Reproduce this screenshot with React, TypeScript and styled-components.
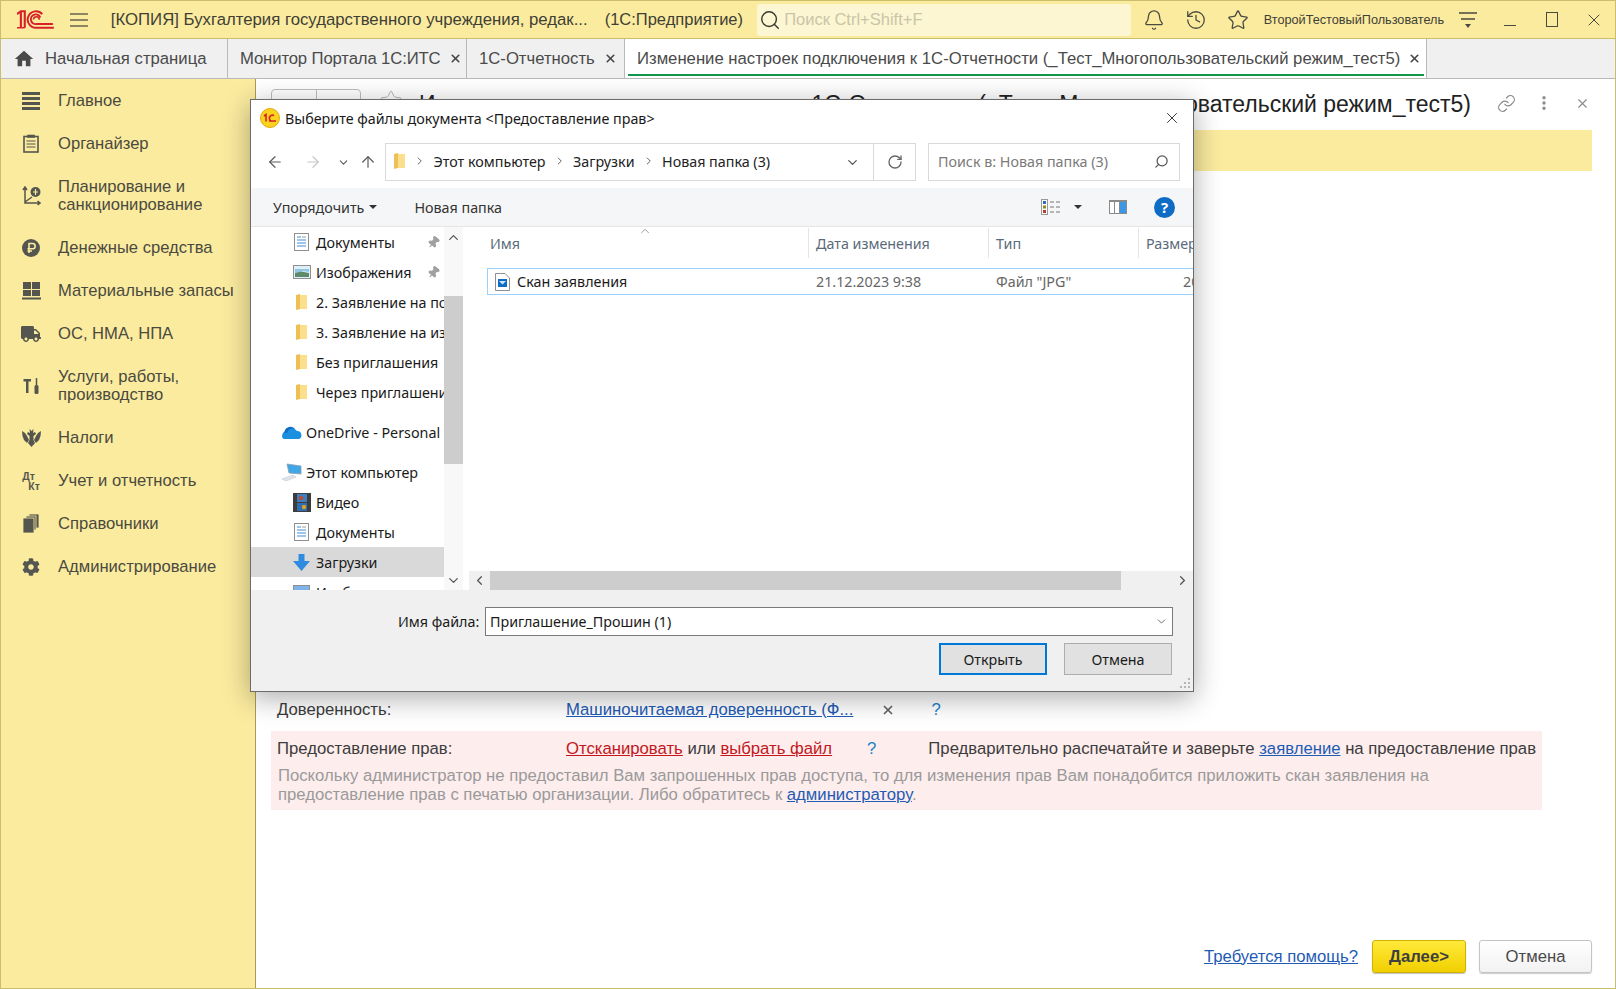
import React from "react";
import styled, { createGlobalStyle } from "styled-components";
import {
  ArrowLeft,
  ArrowRight,
  ArrowUp,
  Bell,
  ChevronDown,
  ChevronLeft,
  ChevronRight,
  ChevronUp,
  EllipsisVertical,
  History,
  Link,
  Pin,
  RotateCw,
  Search,
  Star,
  X,
} from "lucide-react";
import { FaCog, FaTruck } from "react-icons/fa";
import { MdHome } from "react-icons/md";

const Global = createGlobalStyle`
  html, body { margin: 0; padding: 0; background: #fff; }
  * { box-sizing: border-box; }
`;

const ONEC = `"Liberation Sans", Arial, sans-serif`;
const WIN = `"Noto Sans", "Open Sans", sans-serif`;

const Root = styled.div`
  position: relative;
  width: 1616px;
  height: 989px;
  display: flex;
  flex-direction: column;
  overflow: hidden;
  border: 1px solid #c9be6c;
  font-family: ${ONEC};
  background: #fff;
`;

const Header = styled.header`
  flex: 0 0 38px;
  display: flex;
  align-items: center;
  background: #fbeb9f;
  border-bottom: 1px solid #c9be6c;
  color: #3f3f36;
`;

const Logo = styled.svg`
  margin-left: 16px;
  width: 37px;
  height: 19px;
`;

const Burger = styled.svg`
  margin-left: 16px;
  width: 18px;
  height: 14px;
`;

const AppTitle = styled.div`
  margin-left: 23px;
  width: 478px;
  font-size: 16.75px;
  white-space: nowrap;
`;

const AppKind = styled.div`
  margin-left: 17px;
  width: 142px;
  font-size: 16.5px;
  white-space: nowrap;
`;

const GlobalSearch = styled.div`
  margin: 0 2px 0 11px;
  width: 375px;
  height: 32px;
  border-radius: 3px;
  background: #fdf6d2;
  display: flex;
  align-items: center;
  padding-left: 2px;
  gap: 3px;
  color: #c9c5a8;
  font-size: 16.5px;

  svg {
    color: #3b3b33;
  }
`;

const HeadBtn = styled.div`
  flex: 0 0 42px;
  display: flex;
  align-items: center;
  justify-content: center;
  color: #4a4a40;
`;

const MinimizeMark = styled.span`
  width: 12px;
  height: 1px;
  margin-top: 12px;
  background: #4a4a40;
`;

const MaximizeMark = styled.span`
  width: 12px;
  height: 15px;
  border: 1.5px solid #4a4a40;
`;

const UserName = styled.div`
  margin-left: 5px;
  width: 184px;
  font-size: 12.7px;
  white-space: nowrap;
`;

const TabBar = styled.nav`
  flex: 0 0 40px;
  display: flex;
  background: #f0f0f0;
  border-bottom: 1px solid #b9b9b9;
`;

const Tab = styled.div<{ $width: number; $active?: boolean; $tight?: boolean }>`
  position: relative;
  flex: 0 0 ${(p) => p.$width}px;
  min-width: 0;
  display: flex;
  align-items: center;
  padding-left: 12px;
  gap: 8px;
  font-size: 16.7px;
  letter-spacing: ${(p) => (p.$tight ? "-0.13px" : "normal")};
  color: #4a4a4a;
  white-space: nowrap;
  background: ${(p) => (p.$active ? "#fff" : "transparent")};
  border-right: 1px solid #b9b9b9;

  ${(p) =>
    p.$active &&
    `&::after {
      content: "";
      position: absolute;
      left: 3px;
      right: 2px;
      bottom: 2px;
      height: 2px;
      background: #14964b;
    }`}
`;

const HomeMark = styled(MdHome)`
  margin-right: 2px;
`;

const TabClose = styled(X)`
  flex: none;
  margin-left: auto;
  margin-right: 7px;
  color: #444;
  stroke-width: 3;
`;

const Body = styled.div`
  flex: 1;
  display: flex;
  min-height: 0;
`;

const Sidebar = styled.aside`
  flex: 0 0 255px;
  background: #fbeb9f;
  border-right: 1px solid #a79d58;
`;

const SideItem = styled.div`
  display: flex;
  align-items: center;
  padding: 12.5px 8px 12.5px 20px;
  line-height: 18px;
  font-size: 16.6px;
  color: #4a4a40;
`;

const SideIcon = styled.span`
  flex: 0 0 20px;
  height: 18px;
  margin-right: 17px;
  display: flex;
  align-items: center;
  justify-content: center;
  color: #565650;
`;

const DebitCredit = styled.span`
  display: flex;
  flex-direction: column;
  font-size: 10.5px;
  line-height: 10px;
  font-weight: 700;
  color: #565650;

  span:last-child {
    margin-left: 6px;
  }
`;

const Content = styled.main`
  flex: 1;
  display: flex;
  flex-direction: column;
  padding: 0 23px 15px 15px;
  min-width: 0;
`;

const TitleRow = styled.div`
  flex: 0 0 51px;
  display: flex;
  align-items: flex-start;
  padding-top: 10px;
  margin-right: -9px;
`;

const PageNav = styled.div`
  display: flex;
  flex: 0 0 90px;
  height: 28px;
  border: 1px solid #bdbdbd;
  border-radius: 4px;

  span {
    flex: 1;
  }

  span:first-child {
    border-right: 1px solid #bdbdbd;
  }
`;

const PageStar = styled(Star)`
  flex: none;
  margin-left: 18px;
  color: #b5b5b5;
`;

const PageTitle = styled.h1`
  flex: 1;
  min-width: 0;
  margin: 1px 0 0 16px;
  font-size: 23px;
  line-height: 28px;
  font-weight: 400;
  color: #222;
  white-space: nowrap;
`;

const PageBtn = styled.div`
  flex: 0 0 38px;
  height: 28px;
  display: flex;
  align-items: center;
  justify-content: center;
  color: #8a8a8a;
`;

const Notice = styled.div`
  flex: 0 0 41px;
  background: #fbeb9f;
`;

const Line = styled.div`
  margin-top: 529px;
  display: flex;
  align-items: center;
  height: 19px;
  padding-left: 6px;
  font-size: 16.7px;
  color: #3c3c3c;
`;

const Label = styled.span`
  flex: 0 0 289px;
`;

const Anchor = styled.a<{ $danger?: boolean }>`
  color: ${(p) => (p.$danger ? "#c4161c" : "#1e5bb5")};
  text-decoration: underline;
  white-space: nowrap;
`;

const ClearMark = styled(X)`
  margin-left: 28px;
  color: #666;
  stroke-width: 3;
`;

const Hint = styled.span<{ $left: number }>`
  margin-left: ${(p) => p.$left}px;
  color: #1a82c9;
`;

const Alert = styled.section`
  margin-top: 12px;
  width: 1271px;
  height: 79px;
  background: #fdeded;
  padding: 9px 6px 0;
  font-size: 16.7px;
  color: #3c3c3c;
`;

const AlertLine = styled.div`
  display: flex;
  align-items: center;
  height: 18px;
  white-space: pre;
`;

const Remark = styled.span`
  margin-left: 52px;
`;

const AlertNote = styled.p`
  margin: 9px 0 0 1px;
  line-height: 18.5px;
  color: #9a9a9a;
  width: 1200px;
`;

const Actions = styled.footer`
  margin-top: auto;
  display: flex;
  align-items: center;
  justify-content: flex-end;
  gap: 14px;
  font-size: 16.7px;
`;

const Primary = styled.button`
  width: 94px;
  height: 33px;
  border: 1px solid #cfb200;
  border-radius: 3px;
  background: linear-gradient(#ffe93b, #f1d000);
  box-shadow: 0 1px 1px rgba(0, 0, 0, 0.25);
  font: 700 16.7px ${ONEC};
  color: #3f3f3f;
`;

const Secondary = styled.button`
  width: 113px;
  height: 33px;
  margin-left: -1px;
  border: 1px solid #c4c4c4;
  border-radius: 3px;
  background: linear-gradient(#fff, #f2f2f2);
  box-shadow: 0 1px 1px rgba(0, 0, 0, 0.2);
  font: 400 16.7px ${ONEC};
  color: #4a4a4a;
`;

/* file dialog */

const Dialog = styled.div`
  position: absolute;
  left: 249px;
  top: 98px;
  width: 944px;
  height: 593px;
  display: flex;
  flex-direction: column;
  background: #fff;
  border: 1px solid #6b6b6b;
  box-shadow: 0 6px 26px rgba(0, 0, 0, 0.33);
  font-family: ${WIN};
  font-size: 14.3px;
  color: #1a1a1a;
`;

const DlgTitle = styled.div`
  flex: 0 0 36px;
  display: flex;
  align-items: center;
  padding: 0 12px 0 9px;
  gap: 5px;
`;

const DlgClose = styled(X)`
  margin-left: auto;
  color: #222;
`;

const AddressRow = styled.div`
  flex: 0 0 52px;
  display: flex;
  align-items: center;
  padding-right: 13px;
`;

const NavBtn = styled.div<{ $w: number; $off?: boolean }>`
  flex: 0 0 ${(p) => p.$w}px;
  display: flex;
  justify-content: center;
  color: ${(p) => (p.$off ? "#c8c8c8" : "#5c5c5c")};
`;

const AddressBox = styled.div`
  flex: 0 0 531px;
  height: 38px;
  margin-left: 8px;
  display: flex;
  align-items: center;
  border: 1px solid #d9d9d9;
  padding: 0 0 2px 7px;
  color: #222;
`;

const Crumb = styled(ChevronRight)`
  flex: 0 0 27.5px;
  color: #666;
`;

const AddressEnd = styled.div`
  margin-left: auto;
  align-self: flex-start;
  height: 36px;
  display: flex;
  align-items: center;
`;

const AddressDrop = styled(ChevronDown)`
  margin-right: 13px;
  color: #555;
`;

const Refresh = styled.div`
  width: 42px;
  height: 100%;
  display: flex;
  align-items: center;
  justify-content: center;
  border-left: 1px solid #d9d9d9;
  color: #666;
`;

const SearchBox = styled.div`
  flex: 1;
  height: 38px;
  margin-left: 12px;
  display: flex;
  align-items: center;
  justify-content: space-between;
  padding: 0 10px 2px 9px;
  border: 1px solid #d9d9d9;
  color: #7a7a7a;

  svg {
    color: #555;
    transform: scaleX(-1);
  }
`;

const Toolbar = styled.div`
  flex: 0 0 39px;
  display: flex;
  align-items: center;
  padding: 0 18px 0 22px;
  background: #f5f6f7;
  border-bottom: 1px solid #e6e6e6;
  color: #333;
`;

const Caret = styled.span`
  margin-left: 5px;
  width: 0;
  height: 0;
  border: 4px solid transparent;
  border-top: 4px solid #333;
  border-bottom: 0;
`;

const ToolText = styled.span<{ $left?: number }>`
  margin-left: ${(p) => p.$left ?? 0}px;
`;

const ToolRight = styled.div`
  margin-left: auto;
  display: flex;
  align-items: center;
  gap: 8px;
`;

const PaneSlot = styled.span`
  display: flex;
  margin-left: 19px;
`;

const HelpBadge = styled.span`
  width: 21px;
  height: 21px;
  margin-left: 19px;
  border-radius: 50%;
  background: #0f6cc4;
  color: #fff;
  font: 700 15px/21px ${WIN};
  text-align: center;
`;

const Panes = styled.div`
  flex: 0 0 363px;
  display: flex;
  min-height: 0;
`;

const Tree = styled.div`
  flex: 0 0 193px;
  overflow: hidden;
`;

const TreeItem = styled.div<{ $level: 0 | 1; $selected?: boolean; $gap?: boolean }>`
  height: 30px;
  margin-top: ${(p) => (p.$gap ? 10 : 0)}px;
  display: flex;
  align-items: center;
  padding-left: ${(p) => (p.$level === 0 ? 30 : 41)}px;
  gap: ${(p) => (p.$level === 0 ? 3 : 5)}px;
  background: ${(p) => (p.$selected ? "#d9d9d9" : "transparent")};
  white-space: nowrap;
  overflow: hidden;
`;

const TreeIcon = styled.span<{ $level: 0 | 1 }>`
  flex: 0 0 ${(p) => (p.$level === 0 ? 22 : 19)}px;
  display: flex;
  justify-content: center;
`;

const PinMark = styled(Pin)`
  margin-left: auto;
  margin-right: 4px;
  flex: none;
  color: #a0a0a0;
  fill: #a0a0a0;
  transform: rotate(40deg);
`;

const VScroll = styled.div`
  flex: 0 0 19px;
  display: flex;
  flex-direction: column;
  align-items: stretch;
  background: #f8f8f8;
  color: #555;
`;

const ScrollEnd = styled.div`
  height: 20px;
  display: flex;
  align-items: center;
  justify-content: center;
`;

const VThumb = styled.div`
  height: 168px;
  margin: 49px 0 auto;
  background: #cdcdcd;
`;

const ListPane = styled.div`
  flex: 1;
  margin-left: 6px;
  display: flex;
  flex-direction: column;
  min-width: 0;
  overflow: hidden;
`;

const ListHead = styled.div`
  position: relative;
  flex: 0 0 31px;
  display: grid;
  grid-template-columns: 340px 180px 150px 55px;
  padding-top: 1px;
  color: #5a6a7a;
`;

const SortMark = styled(ChevronUp)`
  position: absolute;
  left: 169px;
  top: -3px;
  color: #777;
`;

const HeadCell = styled.div<{ $pad: number }>`
  display: flex;
  align-items: center;
  padding-left: ${(p) => p.$pad}px;
  border-right: 1px solid #e5e5e5;
  white-space: nowrap;
  overflow: hidden;
`;

const FileRow = styled.div`
  margin: 10px 0 0 18px;
  height: 27px;
  display: grid;
  grid-template-columns: 328px 180px 150px 40px;
  align-items: center;
  border: 1px solid #99d1ff;
  border-right: 0;
`;

const FileName = styled.div`
  display: flex;
  align-items: center;
  padding-left: 7px;
  gap: 7px;
`;

const FileMeta = styled.div<{ $pad?: number }>`
  padding-left: ${(p) => p.$pad ?? 0}px;
  color: #666;
  white-space: nowrap;
`;

const HScroll = styled.div`
  margin-top: auto;
  flex: 0 0 19px;
  display: flex;
  background: #f0f0f0;
  color: #555;
`;

const HEnd = styled.div`
  flex: 0 0 21px;
  display: flex;
  align-items: center;
  justify-content: center;
`;

const HThumb = styled.div`
  flex: 0 0 631px;
  margin-right: auto;
  background: #cdcdcd;
`;

const DlgFooter = styled.div`
  position: relative;
  flex: 1;
  background: #f0f0f0;
  padding-top: 17px;
`;

const NameRow = styled.div`
  display: flex;
  align-items: center;
  padding-left: 147px;
`;

const NameLabel = styled.span`
  flex: 0 0 87px;
  white-space: nowrap;
`;

const NameInput = styled.div`
  flex: 0 0 688px;
  height: 29px;
  display: flex;
  align-items: center;
  justify-content: space-between;
  padding: 0 4px;
  background: #fff;
  border: 1px solid #7a7a7a;

  svg {
    color: #444;
  }
`;

const DlgButtons = styled.div`
  margin-top: 7px;
  display: flex;
  justify-content: flex-end;
  gap: 17px;
  padding-right: 21px;
`;

const WinBtn = styled.button<{ $default?: boolean }>`
  width: 108px;
  height: 32px;
  background: #e1e1e1;
  border: ${(p) => (p.$default ? "2px solid #0078d7" : "1px solid #adadad")};
  font: 400 14.3px ${WIN};
  color: #1a1a1a;
`;

const Grip = styled.svg`
  position: absolute;
  right: 2px;
  bottom: 2px;
  width: 12px;
  height: 12px;
`;

/* drawn icons */

const LogoMark = () => (
  <Logo viewBox="0 0 38 19" fill="none">
    <path d="M0 4 L4 1 H8 V18 M4 1 V18" stroke="#d8202a" strokeWidth="2.2" />
    <path d="M0 18 H8" stroke="#d8202a" strokeWidth="1.5" />
    <path d="M26 4 A8.5 8.5 0 1 0 20 18 H38" stroke="#d8202a" strokeWidth="2" />
    <path d="M24 7.5 A5 5 0 1 0 20 14.2 H37" stroke="#d8202a" strokeWidth="2" />
    <path d="M17 9.5 A3 3 0 0 1 23 9.8" stroke="#d8202a" strokeWidth="1.6" />
  </Logo>
);

const BurgerMark = () => (
  <Burger viewBox="0 0 18 14" stroke="#66664f" strokeWidth="1.6">
    <path d="M0 1 H18 M0 7 H18 M0 13 H18" />
  </Burger>
);

const FilterLines = () => (
  <svg width="20" height="18" viewBox="0 0 20 18" stroke="#4a4a40" strokeWidth="1.5" fill="#4a4a40">
    <path d="M1 2 H19 M3 8 H17" fill="none" />
    <path d="M7 13 H13 L10 17 Z" stroke="none" />
  </svg>
);

const MainMark = () => (
  <svg width="18" height="18" viewBox="0 0 18 18" fill="#55554f">
    <rect y="0" width="18" height="3" />
    <rect y="5" width="18" height="3" />
    <rect y="10" width="18" height="3" />
    <rect y="15" width="18" height="3" />
  </svg>
);

const ClipMark = () => (
  <svg width="16" height="19" viewBox="0 0 16 19" fill="none" stroke="#55554f" strokeWidth="1.6">
    <rect x="1" y="2.5" width="14" height="15.5" />
    <path d="M3.5 7 H12.5 M3.5 10 H12.5 M3.5 13 H12.5" strokeWidth="1.2" />
    <path d="M5 3 V1.5 H11 V3 Z" fill="#55554f" />
  </svg>
);

const PlanMark = () => (
  <svg width="19" height="20" viewBox="0 0 19 20" fill="none" stroke="#55554f" strokeWidth="1.5">
    <path d="M3 2 V17 H18 M1 4 L3 1 L5 4 M15.5 15 L18 17 L15.5 19 M3 16 L10 11" />
    <circle cx="13.5" cy="6" r="5" fill="#55554f" stroke="none" />
    <path d="M13.5 3 V9 M11 6 H16" stroke="#fbeb9f" strokeWidth="1.2" />
  </svg>
);

const RubleMark = () => (
  <svg width="18" height="18" viewBox="0 0 18 18">
    <circle cx="9" cy="9" r="9" fill="#55554f" />
    <path
      d="M7 14 V4.5 H10.5 A2.6 2.6 0 0 1 10.5 9.8 H5.5 M5.5 12 H10"
      fill="none"
      stroke="#fbeb9f"
      strokeWidth="1.6"
    />
  </svg>
);

const StockMark = () => (
  <svg width="19" height="18" viewBox="0 0 19 18" fill="#55554f">
    <rect x="1" y="0" width="8" height="7" />
    <rect x="10" y="0" width="8" height="7" />
    <rect x="1" y="8" width="8" height="6" />
    <rect x="10" y="8" width="8" height="6" />
    <rect x="0" y="15.5" width="19" height="2" />
  </svg>
);

const ToolsMark = () => (
  <svg width="17" height="18" viewBox="0 0 17 18" fill="none" stroke="#55554f">
    <path d="M0.5 2 H8 V4.5 H5.5 V16 H3 V4.5 H0.5 Z" fill="#55554f" stroke="none" />
    <path d="M13.5 1 V8" strokeWidth="1.5" />
    <rect x="11.5" y="8" width="4" height="9" rx="1.5" fill="#55554f" stroke="none" />
  </svg>
);

const EagleMark = () => (
  <svg width="19" height="19" viewBox="0 0 19 19" fill="#55554f">
    <path d="M9.5 3 L11.5 1 L11 5 L13 4 L14 6 L11.5 8 V12 L13 15 L9.5 19 L6 15 L7.5 12 V8 L5 6 L6 4 L8 5 L7.5 1 Z" />
    <path d="M0 3 L3 5 L5 8 L7 12 L5 15 L2 12 L0.5 8 Z" />
    <path d="M19 3 L16 5 L14 8 L12 12 L14 15 L17 12 L18.5 8 Z" />
  </svg>
);

const BooksMark = () => (
  <svg width="16" height="19" viewBox="0 0 16 19" fill="#55554f" stroke="#fbeb9f" strokeWidth="0.8">
    <rect x="6" y="0" width="10" height="14" />
    <rect x="3" y="2" width="10" height="14" />
    <rect x="0" y="4" width="11" height="15" />
  </svg>
);

const AppBadge = () => (
  <svg width="20" height="20" viewBox="0 0 20 20">
    <circle cx="10" cy="10" r="9.5" fill="#fbd21d" stroke="#e4a90d" />
    <path d="M4 8 L6 6.5 V13.5 M9 13 H16 M14 7.5 A3 3 0 1 0 11 13" fill="none" stroke="#d8202a" strokeWidth="1.6" />
  </svg>
);

const DocIcon = () => (
  <svg width="15" height="18" viewBox="0 0 15 18" fill="none">
    <rect x="0.5" y="0.5" width="14" height="17" fill="#fff" stroke="#8f8f8f" />
    <path d="M3 4 H7 M3 7 H12 M3 10 H12 M3 13 H12" stroke="#3f8fd8" />
    <path d="M8 4 H12" stroke="#9a9a9a" />
  </svg>
);

const ImageIcon = () => (
  <svg width="18" height="14" viewBox="0 0 18 14">
    <rect x="0.5" y="0.5" width="17" height="13" fill="#dff0f8" stroke="#8f8f8f" />
    <path d="M2 4 H16 V7 L10 6 L2 8 Z" fill="#8fc6e6" />
    <path d="M2 8 L8 6.5 L16 8 V12 H2 Z" fill="#5c8a6a" />
  </svg>
);

const FolderIcon = () => (
  <svg width="13" height="16" viewBox="0 0 13 16">
    <path d="M1 1 L5 0 V15 L1 16 Z" fill="#eebf55" />
    <path d="M5 1 H12 V15 H5 Z" fill="#fbdf8c" />
  </svg>
);

const CloudIcon = () => (
  <svg width="22" height="14" viewBox="0 0 22 14">
    <path d="M5 14 A4 4 0 0 1 3.5 6.6 A6 6 0 0 1 14 4 L9 14 Z" fill="#0f6cc4" />
    <path d="M5 14 L3 14 A3 3 0 0 1 6 8 A5.5 5.5 0 0 1 16 6 A4.2 4.2 0 0 1 18 14 Z" fill="#1b8fe0" />
  </svg>
);

const PcIcon = () => (
  <svg width="22" height="18" viewBox="0 0 22 18">
    <path d="M6 1 L20 3 V11 L8 10 Z" fill="#3fa7e6" stroke="#8aa0b0" strokeWidth="0.8" />
    <path d="M1 16 L12 12 L15 14 L5 18 Z" fill="#dfe5ea" stroke="#c0c8ce" strokeWidth="0.6" />
  </svg>
);

const FilmIcon = () => (
  <svg width="18" height="19" viewBox="0 0 18 19">
    <rect width="18" height="19" fill="#3c3c3c" />
    <rect x="4" y="1" width="10" height="8" fill="#3f7fc0" />
    <rect x="4" y="10" width="10" height="8" fill="#2f6fb0" />
    <circle cx="8" cy="5" r="2.2" fill="#c0492f" />
    <circle cx="11" cy="14" r="2.2" fill="#d8a030" />
  </svg>
);

const DownIcon = () => (
  <svg width="17" height="17" viewBox="0 0 17 17">
    <path d="M5.5 0 H11.5 V7 H17 L8.5 17 L0 7 H5.5 Z" fill="#2e8be0" />
  </svg>
);

const PictureIcon = () => (
  <svg width="17" height="15" viewBox="0 0 17 15">
    <rect x="0.5" y="0.5" width="16" height="14" fill="#7fb4ea" stroke="#8f8f8f" />
  </svg>
);

const JpgIcon = () => (
  <svg width="15" height="18" viewBox="0 0 15 18">
    <path d="M0.5 0.5 H10 L14.5 5 V17.5 H0.5 Z" fill="#fff" stroke="#8f8f8f" />
    <rect x="3" y="6" width="9" height="8" fill="#0f6cc4" />
    <path d="M4 8 H11 L7.5 11.5 Z" fill="#cfe6fa" />
  </svg>
);

const ViewListIcon = () => (
  <svg width="20" height="16" viewBox="0 0 20 16" fill="none">
    <rect x="0.5" y="0.5" width="6" height="15" fill="#fff" stroke="#9a9a9a" />
    <rect x="2" y="2" width="3" height="3" fill="#2a6fc0" />
    <rect x="2" y="6.5" width="3" height="3" fill="#8f8a2a" />
    <rect x="2" y="11" width="3" height="3" fill="#c0392b" />
    <path d="M9 3 H13 M15 3 H19 M9 8 H13 M15 8 H19 M9 13 H13 M15 13 H19" stroke="#777" />
  </svg>
);

const PaneIcon = () => (
  <svg width="18" height="14" viewBox="0 0 18 14">
    <rect width="18" height="14" fill="#8a8a8a" />
    <rect x="1" y="2" width="4" height="11" fill="#fff" />
    <rect x="6" y="2" width="4" height="11" fill="#fff" />
    <rect x="11" y="2" width="6" height="11" fill="#3a97e6" />
  </svg>
);

const GripMark = () => (
  <Grip viewBox="0 0 12 12" fill="#b5b5b5">
    <rect x="9" y="1" width="2" height="2" />
    <rect x="5" y="5" width="2" height="2" />
    <rect x="9" y="5" width="2" height="2" />
    <rect x="1" y="9" width="2" height="2" />
    <rect x="5" y="9" width="2" height="2" />
    <rect x="9" y="9" width="2" height="2" />
  </Grip>
);

const sideItems: { icon: React.ReactNode; label: React.ReactNode }[] = [
  { icon: <MainMark />, label: "Главное" },
  { icon: <ClipMark />, label: "Органайзер" },
  { icon: <PlanMark />, label: <>Планирование и<br />санкционирование</> },
  { icon: <RubleMark />, label: "Денежные средства" },
  { icon: <StockMark />, label: "Материальные запасы" },
  { icon: <FaTruck size={20} />, label: "ОС, НМА, НПА" },
  { icon: <ToolsMark />, label: <>Услуги, работы,<br />производство</> },
  { icon: <EagleMark />, label: "Налоги" },
  {
    icon: (
      <DebitCredit>
        <span>Дт</span>
        <span>Кт</span>
      </DebitCredit>
    ),
    label: "Учет и отчетность",
  },
  { icon: <BooksMark />, label: "Справочники" },
  { icon: <FaCog size={18} />, label: "Администрирование" },
];

const treeItems: {
  icon: React.ReactNode;
  label: string;
  level: 0 | 1;
  pinned?: boolean;
  selected?: boolean;
  gap?: boolean;
}[] = [
  { icon: <DocIcon />, label: "Документы", level: 1, pinned: true },
  { icon: <ImageIcon />, label: "Изображения", level: 1, pinned: true },
  { icon: <FolderIcon />, label: "2. Заявление на подпись", level: 1 },
  { icon: <FolderIcon />, label: "3. Заявление на изменение", level: 1 },
  { icon: <FolderIcon />, label: "Без приглашения", level: 1 },
  { icon: <FolderIcon />, label: "Через приглашение", level: 1 },
  { icon: <CloudIcon />, label: "OneDrive - Personal", level: 0, gap: true },
  { icon: <PcIcon />, label: "Этот компьютер", level: 0, gap: true },
  { icon: <FilmIcon />, label: "Видео", level: 1 },
  { icon: <DocIcon />, label: "Документы", level: 1 },
  { icon: <DownIcon />, label: "Загрузки", level: 1, selected: true },
  { icon: <PictureIcon />, label: "Изображения", level: 1 },
];

function FileDialog() {
  return (
    <Dialog>
      <DlgTitle>
        <AppBadge />
        Выберите файлы документа &lt;Предоставление прав&gt;
        <DlgClose size={18} strokeWidth={1.2} />
      </DlgTitle>

      <AddressRow>
        <NavBtn $w={48}>
          <ArrowLeft size={18} strokeWidth={1.6} />
        </NavBtn>
        <NavBtn $w={28} $off>
          <ArrowRight size={18} strokeWidth={1.6} />
        </NavBtn>
        <NavBtn $w={32}>
          <ChevronDown size={13} />
        </NavBtn>
        <NavBtn $w={18}>
          <ArrowUp size={18} strokeWidth={1.6} />
        </NavBtn>
        <AddressBox>
          <FolderIcon />
          <Crumb size={12} />
          Этот компьютер
          <Crumb size={12} />
          Загрузки
          <Crumb size={12} />
          Новая папка (3)
          <AddressEnd>
            <AddressDrop size={15} />
            <Refresh>
              <RotateCw size={16} />
            </Refresh>
          </AddressEnd>
        </AddressBox>
        <SearchBox>
          Поиск в: Новая папка (3)
          <Search size={15} />
        </SearchBox>
      </AddressRow>

      <Toolbar>
        <ToolText>Упорядочить</ToolText>
        <Caret />
        <ToolText $left={37}>Новая папка</ToolText>
        <ToolRight>
          <ViewListIcon />
          <Caret />
          <PaneSlot>
            <PaneIcon />
          </PaneSlot>
          <HelpBadge>?</HelpBadge>
        </ToolRight>
      </Toolbar>

      <Panes>
        <Tree>
          {treeItems.map((t, i) => (
            <TreeItem key={i} $level={t.level} $selected={t.selected} $gap={t.gap}>
              <TreeIcon $level={t.level}>{t.icon}</TreeIcon>
              {t.label}
              {t.pinned && <PinMark size={13} />}
            </TreeItem>
          ))}
        </Tree>
        <VScroll>
          <ScrollEnd>
            <ChevronUp size={15} />
          </ScrollEnd>
          <VThumb />
          <ScrollEnd>
            <ChevronDown size={15} />
          </ScrollEnd>
        </VScroll>

        <ListPane>
          <ListHead>
            <SortMark size={14} strokeWidth={1.2} />
            <HeadCell $pad={21}>Имя</HeadCell>
            <HeadCell $pad={7}>Дата изменения</HeadCell>
            <HeadCell $pad={7}>Тип</HeadCell>
            <HeadCell $pad={7}>Размер</HeadCell>
          </ListHead>
          <FileRow>
            <FileName>
              <JpgIcon />
              Скан заявления
            </FileName>
            <FileMeta>21.12.2023 9:38</FileMeta>
            <FileMeta>Файл "JPG"</FileMeta>
            <FileMeta $pad={37}>20 КБ</FileMeta>
          </FileRow>
          <HScroll>
            <HEnd>
              <ChevronLeft size={15} />
            </HEnd>
            <HThumb />
            <HEnd>
              <ChevronRight size={15} />
            </HEnd>
          </HScroll>
        </ListPane>
      </Panes>

      <DlgFooter>
        <NameRow>
          <NameLabel>Имя файла:</NameLabel>
          <NameInput>
            Приглашение_Прошин (1)
            <ChevronDown size={13} strokeWidth={1.4} />
          </NameInput>
        </NameRow>
        <DlgButtons>
          <WinBtn $default>Открыть</WinBtn>
          <WinBtn>Отмена</WinBtn>
        </DlgButtons>
        <GripMark />
      </DlgFooter>
    </Dialog>
  );
}

export default function App() {
  return (
    <Root>
      <Global />
      <Header>
        <LogoMark />
        <BurgerMark />
        <AppTitle>[КОПИЯ] Бухгалтерия государственного учреждения, редак...</AppTitle>
        <AppKind>(1С:Предприятие)</AppKind>
        <GlobalSearch>
          <Search size={22} strokeWidth={1.6} />
          Поиск Ctrl+Shift+F
        </GlobalSearch>
        <HeadBtn>
          <Bell size={22} strokeWidth={1.4} />
        </HeadBtn>
        <HeadBtn>
          <History size={22} strokeWidth={1.4} />
        </HeadBtn>
        <HeadBtn>
          <Star size={22} strokeWidth={1.4} />
        </HeadBtn>
        <UserName>ВторойТестовыйПользователь</UserName>
        <HeadBtn>
          <FilterLines />
        </HeadBtn>
        <HeadBtn>
          <MinimizeMark />
        </HeadBtn>
        <HeadBtn>
          <MaximizeMark />
        </HeadBtn>
        <HeadBtn>
          <X size={20} strokeWidth={1.2} />
        </HeadBtn>
      </Header>

      <TabBar>
        <Tab $width={227}>
          <HomeMark size={22} />
          Начальная страница
        </Tab>
        <Tab $width={239} $tight>
          Монитор Портала 1С:ИТС
          <TabClose size={13} />
        </Tab>
        <Tab $width={158}>
          1С-Отчетность
          <TabClose size={13} />
        </Tab>
        <Tab $width={802} $active>
          Изменение настроек подключения к 1С-Отчетности (_Тест_Многопользовательский режим_тест5)
          <TabClose size={13} />
        </Tab>
      </TabBar>

      <Body>
        <Sidebar>
          {sideItems.map((s, i) => (
            <SideItem key={i}>
              <SideIcon>{s.icon}</SideIcon>
              <span>{s.label}</span>
            </SideItem>
          ))}
        </Sidebar>

        <Content>
          <TitleRow>
            <PageNav>
              <span />
              <span />
            </PageNav>
            <PageStar size={24} strokeWidth={1} />
            <PageTitle>
              Изменение настроек подключения к 1С-Отчетности (_Тест_Многопользовательский режим_тест5)
            </PageTitle>
            <PageBtn>
              <Link size={19} strokeWidth={1.5} />
            </PageBtn>
            <PageBtn>
              <EllipsisVertical size={18} strokeWidth={2.5} />
            </PageBtn>
            <PageBtn>
              <X size={15} strokeWidth={1.8} />
            </PageBtn>
          </TitleRow>
          <Notice />

          <Line>
            <Label>Доверенность:</Label>
            <Anchor>Машиночитаемая доверенность (Ф...</Anchor>
            <ClearMark size={14} />
            <Hint $left={36}>?</Hint>
          </Line>

          <Alert>
            <AlertLine>
              <Label>Предоставление прав:</Label>
              <Anchor $danger>Отсканировать</Anchor>
              {" или "}
              <Anchor $danger>выбрать файл</Anchor>
              <Hint $left={35}>?</Hint>
              <Remark>
                Предварительно распечатайте и заверьте <Anchor>заявление</Anchor> на предоставление прав
              </Remark>
            </AlertLine>
            <AlertNote>
              Поскольку администратор не предоставил Вам запрошенных прав доступа, то для изменения прав Вам понадобится приложить скан заявления на
              предоставление прав с печатью организации. Либо обратитесь к <Anchor>администратору</Anchor>.
            </AlertNote>
          </Alert>

          <Actions>
            <Anchor>Требуется помощь?</Anchor>
            <Primary>Далее&gt;</Primary>
            <Secondary>Отмена</Secondary>
          </Actions>
        </Content>
      </Body>

      <FileDialog />
    </Root>
  );
}
